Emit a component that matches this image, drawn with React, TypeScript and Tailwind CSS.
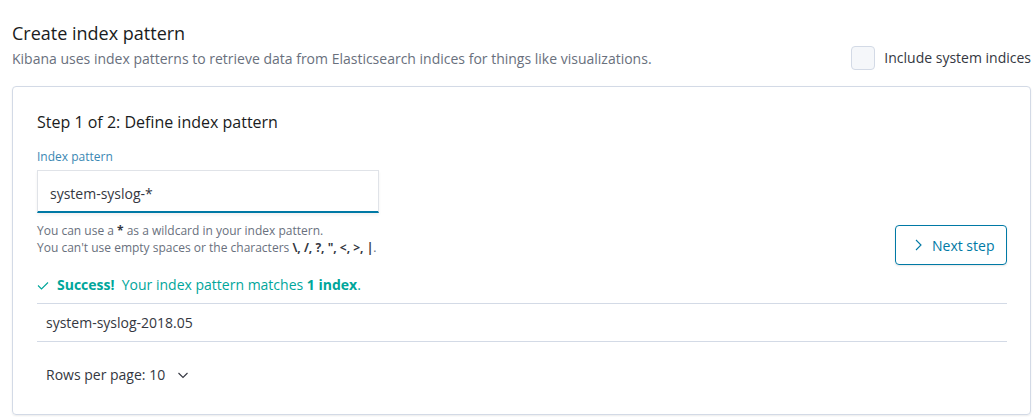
import React from 'react';

const ChevronRight: React.FC = () => (
  <svg width="16" height="16" viewBox="0 0 16 16" fill="none" className="shrink-0">
    <path d="M6 3 L11 8 L6 13" stroke="#0079a5" strokeWidth="1.1" />
  </svg>
);

const ChevronDown: React.FC = () => (
  <svg width="12" height="12" viewBox="0 0 12 12" fill="none" className="shrink-0">
    <path d="M1.5 4 L6 8.5 L10.5 4" stroke="#343741" strokeWidth="1.1" />
  </svg>
);

const Check: React.FC = () => (
  <svg width="12" height="12" viewBox="0 0 12 12" fill="none" className="shrink-0">
    <path d="M1 6.5 L4.5 10 L11 3.5" stroke="#00a69b" strokeWidth="1.1" />
  </svg>
);

const App: React.FC = () => {
  return (
    <div
      className="bg-white w-[1034px] h-[417px] pl-[12px] pr-[3px] pt-[21px] text-[#343741]"
      style={{ fontFamily: '"Open Sans", "Noto Sans", sans-serif' }}
    >
      {/* header */}
      <div className="flex items-start justify-between">
        <div>
          <h1 className="text-[18px] leading-[24px] text-[#1a1c21]">Create index pattern</h1>
          <p className="mt-[4px] text-[14px] leading-[20px] text-[#69707d]">
            Kibana uses index patterns to retrieve data from Elasticsearch indices for things like visualizations.
          </p>
        </div>
        <label className="flex items-center gap-[9px] mt-[25px]">
          <span className="w-[24px] h-[24px] rounded-[4px] border border-[#d3dae6] bg-[#f5f7fa]" />
          <span className="text-[14px] leading-[20px] text-[#343741]">Include system indices</span>
        </label>
      </div>

      {/* card */}
      <div className="mt-[16px] border border-[#d3dae6] rounded-[4px] shadow-[0_1px_2px_rgba(0,0,0,0.08)] pl-[24px] pr-[23px] pt-[23px] pb-[29px]">
        <div className="flex items-start justify-between">
          <div>
            <h2 className="text-[16px] leading-[24px] text-[#1a1c21]">Step 1 of 2: Define index pattern</h2>
            <div className="mt-[15px] text-[12px] leading-[16px] text-[#3a87b3]">Index pattern</div>
            <div className="mt-[5px] w-[342px] h-[43px] bg-white border border-[#e0e3e8] border-b-2 border-b-[#0079a5] shadow-[0_2px_3px_rgba(0,0,0,0.06)] flex items-center pl-[12px] pt-[4px] text-[14px] text-[#343741]">
              system-syslog-*
            </div>
            <div className="mt-[9px] text-[12px] leading-[17px] text-[#69707d]">
              <div>
                You can use a <b className="font-bold text-[#343741]">*</b> as a wildcard in your index pattern.
              </div>
              <div>
                You can't use empty spaces or the characters{' '}
                <b className="font-bold text-[#343741]">\, /, ?, ", &lt;, &gt;, |</b>.
              </div>
            </div>
          </div>
          <button className="mt-[115px] w-[112px] h-[40px] rounded-[4px] border border-[#0079a5] flex items-center pl-[14px] gap-[6px] text-[14px] text-[#0079a5] shadow-[0_1px_2px_rgba(0,0,0,0.1)]">
            <ChevronRight />
            Next step
          </button>
        </div>

        <div className="mt-[10px] flex items-center gap-[8px] text-[14px] leading-[20px] text-[#00a69b]">
          <Check />
          <span>
            <b className="font-bold">Success!</b>&nbsp; Your index pattern matches <b className="font-bold">1 index</b>.
          </span>
        </div>

        <div className="mt-[8px] border-t border-b border-[#d3dae6]">
          <div className="h-[37px] flex items-center pl-[9px] text-[14px] text-[#343741]">system-syslog-2018.05</div>
        </div>

        <div className="mt-[23px] pl-[9px] flex items-center gap-[12px] text-[14px] leading-[20px] text-[#343741]">
          <span>Rows per page: 10</span>
          <ChevronDown />
        </div>
      </div>
    </div>
  );
};

export default App;
